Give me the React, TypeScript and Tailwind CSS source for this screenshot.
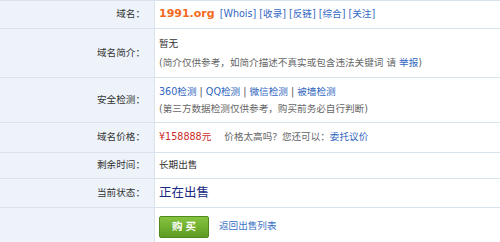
import React from "react";

const Row = ({
  label,
  h,
  children,
  last,
}: {
  label: string;
  h: string;
  children: React.ReactNode;
  last?: boolean;
}) => (
  <div className={`flex ${h} ${last ? "" : "border-b border-[#d9e3ee]"}`}>
    <div className="w-[155px] shrink-0 bg-[#eef3fa] border-r border-[#d9e3ee] flex items-center justify-end pr-[9px] text-[#333]">
      {label}
    </div>
    <div className="flex-1 bg-white pl-[4px] flex flex-col justify-center">{children}</div>
  </div>
);

export default function App() {
  return (
    <div
      className="w-[500px] h-[242px] overflow-hidden bg-white border-t border-[#d9e3ee] text-[9.6px] text-[#333]"
      style={{ fontFamily: '"DejaVu Sans", "Noto Sans CJK SC", sans-serif' }}
    >
      <Row label="域名：" h="h-[28px]">
        <div className="flex items-center">
          <span className="text-[11px] font-bold text-[#f26b1d]">1991.org</span>
          <span className="ml-[5px] text-[#3568c4] whitespace-pre">
            [Whois] [收录] [反链] [综合] [关注]
          </span>
        </div>
      </Row>
      <Row label="域名简介：" h="h-[49px]">
        <div className="leading-[19px]">暂无</div>
        <div className="leading-[19px] text-[#666]">
          (简介仅供参考，如简介描述不真实或包含违法关键词 请{" "}
          <span className="text-[#2f66c0]">举报</span>)
        </div>
      </Row>
      <Row label="安全检测：" h="h-[45px]">
        <div className="leading-[17px] text-[#2f66c0] whitespace-pre">
          360检测 <span className="text-[#555]">|</span> QQ检测{" "}
          <span className="text-[#555]">|</span> 微信检测{" "}
          <span className="text-[#555]">|</span> 被墙检测
        </div>
        <div className="leading-[17px] text-[#666]">(第三方数据检测仅供参考，购买前务必自行判断)</div>
      </Row>
      <Row label="域名价格：" h="h-[30px]">
        <div className="flex items-center">
          <span className="text-[#cc2a2a]">¥158888元</span>
          <span className="ml-[13px] text-[#666]">价格太高吗？您还可以：</span>
          <span className="text-[#2f66c0]">委托议价</span>
        </div>
      </Row>
      <Row label="剩余时间：" h="h-[26px]">
        <div>长期出售</div>
      </Row>
      <Row label="当前状态：" h="h-[29px]">
        <div className="text-[12.5px] text-[#1a2a80]">正在出售</div>
      </Row>
      <Row label="" h="h-[35px]" last>
        <div className="flex items-center pt-[2px]">
          <button className="w-[50px] h-[22px] rounded-[2px] border border-[#4f8a1f] bg-gradient-to-b from-[#86c43f] to-[#5c9c22] text-white font-bold text-[10.5px] tracking-[3px] pl-[3px]">
            购买
          </button>
          <span className="ml-[10px] text-[#3a72c6]">返回出售列表</span>
        </div>
      </Row>
    </div>
  );
}
